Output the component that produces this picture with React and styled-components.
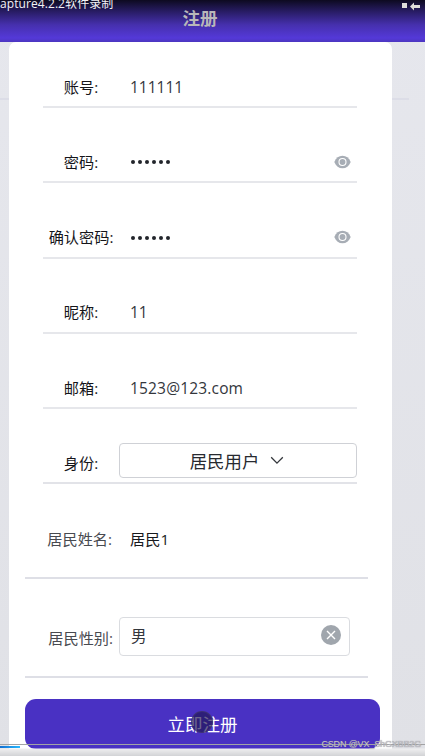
import React, { useState } from "react";
import styled, { createGlobalStyle } from "styled-components";

const GlobalStyle = createGlobalStyle`
  * {
    box-sizing: border-box;
  }

  body {
    margin: 0;
    overflow: hidden;
    font-family: "Open Sans", "Noto Sans CJK SC", sans-serif;
  }

  input,
  button {
    font-family: inherit;
  }
`;

const Page = styled.div`
  position: relative;
  display: flex;
  flex-direction: column;
  width: 425px;
  height: 756px;
  overflow: hidden;
  background: linear-gradient(#e6e7ed, #e0e1e6);
`;

const Header = styled.header`
  position: relative;
  flex: none;
  display: flex;
  justify-content: center;
  height: 42px;
  padding-right: 25px;
  background: linear-gradient(#0d0a20 0, #291d67 12px, #4630ae 25px, #5439d8 38px, #4c36c0 42px);
`;

const Title = styled.h1`
  margin: 0;
  color: #b9b7b9;
  font-size: 17.5px;
  line-height: 37px;
  font-weight: 700;
`;

const Caption = styled.div`
  position: absolute;
  left: 0;
  top: -5px;
  color: #f2f2f5;
  font-size: 12px;
  line-height: 18px;
  letter-spacing: 0.08px;
  white-space: nowrap;
`;

const Controls = styled.svg`
  position: absolute;
  right: 4px;
  top: 2px;
`;

const Rule = styled.div`
  position: absolute;
  left: 0;
  top: 98px;
  width: 409px;
  height: 2px;
  background: #dcdde7;
`;

const Card = styled.main`
  position: relative;
  flex: none;
  width: 383px;
  height: 714px;
  margin-left: 9px;
  padding: 25px 12px 0 16px;
  border-radius: 7px 7px 0 0;
  background: #fff;
`;

const Field = styled.div`
  display: grid;
  grid-template-columns: 76px 1fr;
  align-items: center;
  width: 314px;
  height: 41px;
  margin: 0 0 34.3px 18px;
  border-bottom: 2px solid ${(props) => (props.$thick ? "#e2e3e8" : "#e6e7eb")};
`;

const Label = styled.label`
  color: ${(props) => (props.$muted ? "#484a50" : "#15151a")};
  font-size: 15.2px;
  line-height: 22px;
  text-align: center;
  white-space: nowrap;
`;

const InputBox = styled.div`
  display: flex;
  align-items: center;
  min-width: 0;
  padding: 0 6px 0 11px;
`;

const Input = styled.input`
  flex: 1;
  min-width: 0;
  height: 24px;
  padding: 0;
  border: 0;
  outline: 0;
  background: transparent;
  color: ${(props) => (props.$dark ? "#17191d" : "#33363c")};
  font-size: ${(props) => (props.$dark ? "15.2px" : "15.5px")};
  letter-spacing: ${(props) => props.$spacing || "0"};
`;

const Dots = styled.div`
  flex: 1;
  display: flex;
  gap: 2.8px;
  padding: 1px 0 0 1px;

  i {
    width: 4.2px;
    height: 4.2px;
    border-radius: 50%;
    background: #22252b;
  }
`;

const IconButton = styled.button`
  display: flex;
  padding: 0;
  border: 0;
  background: none;
`;

const Select = styled.button`
  display: flex;
  align-items: center;
  justify-content: center;
  gap: 11px;
  height: 35px;
  margin: -5px 0 0;
  padding: 0 2px 0 0;
  border: 1px solid #cfd1d6;
  border-radius: 4px;
  background: #fff;
  color: #272a30;
  font-size: 17.4px;
`;

const WideField = styled.div`
  display: grid;
  grid-template-columns: 92px 1fr;
  align-items: center;
  width: 343px;
  height: ${(props) => props.$height};
  padding: ${(props) => props.$padding};
  border-bottom: 2px solid #dedfe6;

  ${Label} {
    text-align: right;
    padding-right: ${(props) => props.$labelGap};
  }

  ${InputBox} {
    padding-left: 13px;
    margin-top: -3px;
  }
`;

const GenderBox = styled.div`
  display: flex;
  align-items: center;
  width: 231px;
  height: 39px;
  margin: -4px 0 0 2px;
  padding: 0 8px 2px 11px;
  border: 1px solid #dadce0;
  border-radius: 4px;
`;

const Submit = styled.button`
  display: block;
  width: 355px;
  height: 50px;
  margin-top: 21px;
  padding: 0 0 1px;
  border: 0;
  border-radius: 11px;
  background: #4931c3;
  color: #fff;
  font-size: 17.5px;
`;

const Pointer = styled.div`
  position: absolute;
  left: 191px;
  top: 711px;
  width: 22px;
  height: 22px;
  border: 1px solid rgba(70, 60, 110, 0.6);
  border-radius: 50%;
  background: rgba(30, 20, 80, 0.65);
`;

const Player = styled.div`
  position: absolute;
  left: 0;
  right: 0;
  bottom: 0;
  height: 12px;
  border-top: 1px solid rgba(145, 145, 150, 0.75);
  background: linear-gradient(transparent 3px, #eeeeef 4px, #d2d3d6 100%);
`;

const Progress = styled.div`
  width: 20px;
  height: 2px;
  margin-top: 1px;
  background: linear-gradient(90deg, #126ed1, #28b9ff);
`;

const Watermark = styled.div`
  position: absolute;
  right: 4px;
  bottom: 6px;
  color: #c6c5cd;
  font-family: "Liberation Sans", sans-serif;
  font-size: 9px;
  line-height: 12px;
  letter-spacing: -0.15px;
  text-shadow: 0 0 1px #777;
`;

function EyeIcon() {
  return (
    <svg width="17" height="14" viewBox="0 0 17 14">
      <path d="M.3 7C2 2.8 4.8.7 8.5.7S15 2.8 16.7 7C15 11.2 12.2 13.3 8.5 13.3S2 11.2.3 7Z" fill="#a7adb5" />
      <circle cx="8.5" cy="7" r="3.5" fill="#a7adb5" stroke="#fff" strokeWidth="1.1" />
    </svg>
  );
}

function PasswordField({ label }) {
  return (
    <Field>
      <Label>{label}</Label>
      <InputBox>
        <Dots>
          {[0, 1, 2, 3, 4, 5].map((dot) => (
            <i key={dot} />
          ))}
        </Dots>
        <IconButton type="button" aria-label={label}>
          <EyeIcon />
        </IconButton>
      </InputBox>
    </Field>
  );
}

function App() {
  const [form, setForm] = useState({
    account: "111111",
    nickname: "11",
    email: "1523@123.com",
    name: "居民1",
    gender: "男",
  });

  const bind = (key) => ({
    value: form[key],
    onChange: (e) => setForm({ ...form, [key]: e.target.value }),
  });

  return (
    <Page>
      <GlobalStyle />
      <Header>
        <Caption>apture4.2.2软件录制</Caption>
        <Title>注册</Title>
        <Controls width="20" height="10" viewBox="0 0 20 10">
          <path d="M1 1h5v5H1zM9 4.5l4-4V3h6v3h-6v2.5z" fill="#deddd9" />
        </Controls>
      </Header>
      <Rule />
      <Card>
        <Field>
          <Label>账号:</Label>
          <InputBox>
            <Input {...bind("account")} />
          </InputBox>
        </Field>
        <PasswordField label="密码:" />
        <PasswordField label="确认密码:" />
        <Field>
          <Label>昵称:</Label>
          <InputBox>
            <Input {...bind("nickname")} />
          </InputBox>
        </Field>
        <Field>
          <Label>邮箱:</Label>
          <InputBox>
            <Input $spacing="0.17px" {...bind("email")} />
          </InputBox>
        </Field>
        <Field $thick>
          <Label>身份:</Label>
          <Select type="button">
            居民用户
            <svg width="14" height="9" viewBox="0 0 14 9">
              <path d="m1.2 1.3 5.8 5.8 5.8-5.8" fill="none" stroke="#34373c" strokeWidth="1.3" />
            </svg>
          </Select>
        </Field>

        <WideField $height="60px" $padding="0 0 17px" $labelGap="5px">
          <Label $muted>居民姓名:</Label>
          <InputBox>
            <Input $dark {...bind("name")} />
          </InputBox>
        </WideField>
        <WideField $height="99px" $padding="22px 0 0" $labelGap="4px">
          <Label $muted>居民性别:</Label>
          <GenderBox>
            <Input {...bind("gender")} />
            <IconButton type="button" onClick={() => setForm({ ...form, gender: "" })}>
              <svg width="20" height="20" viewBox="0 0 20 20">
                <circle cx="10" cy="10" r="10" fill="#a0a6ad" />
                <path d="m6 6 8 8m0-8-8 8" stroke="#fff" strokeWidth="1.4" />
              </svg>
            </IconButton>
          </GenderBox>
        </WideField>
        <Submit type="button">立即注册</Submit>
      </Card>
      <Pointer />
      <Player>
        <Progress />
      </Player>
      <Watermark>CSDN @VX_ShGXBB2G</Watermark>
    </Page>
  );
}

export default App;
